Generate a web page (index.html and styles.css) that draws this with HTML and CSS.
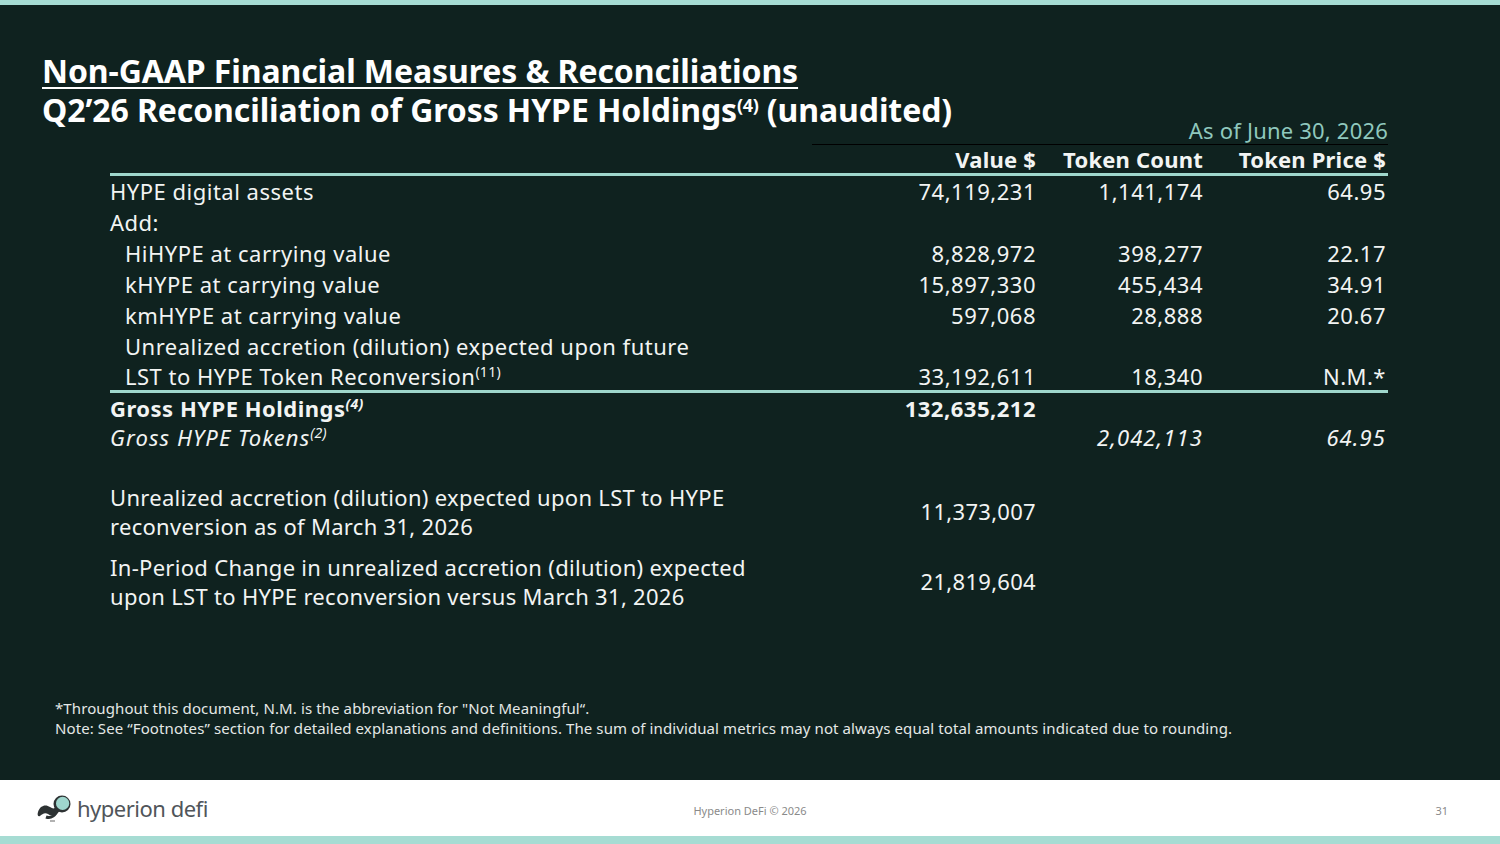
FILE: index.html
```html
<!DOCTYPE html>
<html lang="en">
<head>
<meta charset="utf-8">
<title>Non-GAAP Financial Measures & Reconciliations</title>
<link rel="stylesheet" href="styles.css">
</head>
<body>
<div class="slide">
  <div class="bar-top"></div>
  <main class="main">
    <h1 class="title">
      <span class="title-1">Non-GAAP Financial Measures &amp; Reconciliations</span>
      <span class="title-2">Q2’26 Reconciliation of Gross HYPE Holdings<sup>(4)</sup> (unaudited)</span>
    </h1>

    <section class="table">
      <div class="asof">As of June 30, 2026</div>
      <div class="asof-rule"></div>
      <div class="row head">
        <div class="c-label"></div>
        <div class="c-num">Value $</div>
        <div class="c-num">Token Count</div>
        <div class="c-num">Token Price $</div>
      </div>
      <div class="rule"></div>
      <div class="row">
        <div class="c-label">HYPE digital assets</div>
        <div class="c-num">74,119,231</div>
        <div class="c-num">1,141,174</div>
        <div class="c-num">64.95</div>
      </div>
      <div class="row">
        <div class="c-label">Add:</div>
        <div class="c-num"></div><div class="c-num"></div><div class="c-num"></div>
      </div>
      <div class="row">
        <div class="c-label indent">HiHYPE at carrying value</div>
        <div class="c-num">8,828,972</div>
        <div class="c-num">398,277</div>
        <div class="c-num">22.17</div>
      </div>
      <div class="row">
        <div class="c-label indent">kHYPE at carrying value</div>
        <div class="c-num">15,897,330</div>
        <div class="c-num">455,434</div>
        <div class="c-num">34.91</div>
      </div>
      <div class="row">
        <div class="c-label indent">kmHYPE at carrying value</div>
        <div class="c-num">597,068</div>
        <div class="c-num">28,888</div>
        <div class="c-num">20.67</div>
      </div>
      <div class="row two">
        <div class="c-label indent">Unrealized accretion (dilution) expected upon future<br>LST to HYPE Token Reconversion<sup>(11)</sup></div>
        <div class="c-num bottom">33,192,611</div>
        <div class="c-num bottom">18,340</div>
        <div class="c-num bottom">N.M.*</div>
      </div>
      <div class="rule"></div>
      <div class="row bold">
        <div class="c-label">Gross HYPE Holdings<sup><i>(4)</i></sup></div>
        <div class="c-num">132,635,212</div>
        <div class="c-num"></div>
        <div class="c-num"></div>
      </div>
      <div class="row ital">
        <div class="c-label">Gross HYPE Tokens<sup>(2)</sup></div>
        <div class="c-num"></div>
        <div class="c-num">2,042,113</div>
        <div class="c-num">64.95</div>
      </div>

      <div class="row extra first">
        <div class="c-label">Unrealized accretion (dilution) expected upon LST to HYPE<br>reconversion as of March 31, 2026</div>
        <div class="c-num mid">11,373,007</div>
      </div>
      <div class="row extra">
        <div class="c-label">In-Period Change in unrealized accretion (dilution) expected<br>upon LST to HYPE reconversion versus March 31, 2026</div>
        <div class="c-num mid">21,819,604</div>
      </div>
    </section>

    <div class="notes">
      <p>*Throughout this document, N.M. is the abbreviation for "Not Meaningful“.</p>
      <p>Note: See “Footnotes” section for detailed explanations and definitions. The sum of individual metrics may not always equal total amounts indicated due to rounding.</p>
    </div>
  </main>
  <footer class="footer">
    <div class="logo">
      <svg class="logo-mark" width="36" height="30" viewBox="0 0 36 30" aria-hidden="true">
        <path d="M1 19 C3 12 9 11 13 14 C16 16 18 16 19 13 L23 16 C21 23 15 24 11 21 C8 19 5 21 3 23 C1 24 0 22 1 19 Z" fill="#2d3233"/>
        <circle cx="25" cy="11" r="8.5" fill="#2d3233"/>
        <circle cx="25.6" cy="10.4" r="6.6" fill="#9fd6cd"/>
        <path d="M20 17 C19 22 14 26 9 24" stroke="#2d3233" stroke-width="3" fill="none"/>
        <rect x="13" y="27.5" width="5" height="1" fill="#666"/>
      </svg>
      <span class="logo-text">hyperion defi</span>
    </div>
    <div class="foot-center">Hyperion DeFi © 2026</div>
    <div class="foot-page">31</div>
  </footer>
  <div class="bar-bottom"></div>
</div>
</body>
</html>
```

FILE: styles.css
```css
* { box-sizing: border-box; }
html, body { margin: 0; padding: 0; }
body {
  width: 1500px;
  height: 844px;
  overflow: hidden;
  background: #0f211f;
  font-family: "Noto Sans", "Open Sans", sans-serif;
  color: #f2f4f3;
}
.slide {
  width: 1500px;
  height: 844px;
  display: flex;
  flex-direction: column;
}
.bar-top { height: 5px; background: #a6dcd3; flex: none; }
.bar-bottom { height: 8px; background: #a6dcd3; flex: none; }
.main {
  flex: 1;
  background: #0f221f;
  padding: 46px 0 0 0;
  position: relative;
}
.title {
  margin: 0 0 0 42px;
  font-family: "Noto Sans", sans-serif;
  font-weight: 700;
  font-size: 32px;
  line-height: 39px;
  letter-spacing: -0.1px;
  color: #ffffff;
}
.title span { display: block; }
.title-1 { text-decoration: underline; text-decoration-thickness: 2px; text-underline-offset: 4px; }
.title sup { font-size: 18px; line-height: 0; vertical-align: 10px; letter-spacing: -0.3px; }

.table {
  margin: -12px 112px 0 110px;
  width: 1278px;
  font-size: 22px;
  letter-spacing: 0.5px;
}
.asof {
  text-align: right;
  color: #8fc8bd;
  font-size: 22px;
  line-height: 26px;
  letter-spacing: 0.2px;
}
.asof-rule {
  margin-left: 702px;
  height: 1px;
  background: #000;
  margin-top: 1px;
}
.row {
  display: grid;
  grid-template-columns: 760px 168px 167px 183px;
  height: 31px;
  align-items: center;
  line-height: 31px;
}
.row.head { font-weight: 700; height: 28px; line-height: 28px; letter-spacing: 0.2px; }
.c-label { white-space: nowrap; }
.c-label.indent { padding-left: 15px; }
.c-num { text-align: right; padding-right: 2px; }
.row.two { height: 59px; line-height: 30px; align-items: end; }
.rule { height: 3px; background: #9fd7cc; margin: 0; }
.row.bold { font-weight: 700; height: 29px; padding-bottom: 4px; }
.row.ital { font-style: italic; letter-spacing: 1.1px; }
sup { font-size: 14px; line-height: 0; vertical-align: 8px; letter-spacing: 0.3px; }
.row.extra { height: 60px; line-height: 29.5px; letter-spacing: 0.3px; }
.row.extra.first { margin-top: 29px; margin-bottom: 10px; }
.row.extra .c-label { white-space: nowrap; }

.notes {
  position: absolute;
  left: 55px;
  top: 693px;
  font-size: 15px;
  line-height: 20px;
  color: #e4e8e6;
  letter-spacing: 0.1px;
}
.notes p { margin: 0; }

.footer {
  height: 56px;
  background: #ffffff;
  flex: none;
  display: grid;
  grid-template-columns: 1fr auto 1fr;
  align-items: center;
  padding: 0 52px 0 52px;
}
.logo { display: flex; align-items: center; gap: 4px; margin-left: -15px; }
.logo-text {
  font-family: "Noto Sans", sans-serif;
  font-size: 22px;
  color: #50555a;
  letter-spacing: -0.5px;
  line-height: 1;
}
.foot-center { font-size: 11px; color: #8a8a8a; padding-top: 4px; }
.foot-page { font-size: 11px; color: #8a8a8a; text-align: right; padding-top: 4px; }
```
